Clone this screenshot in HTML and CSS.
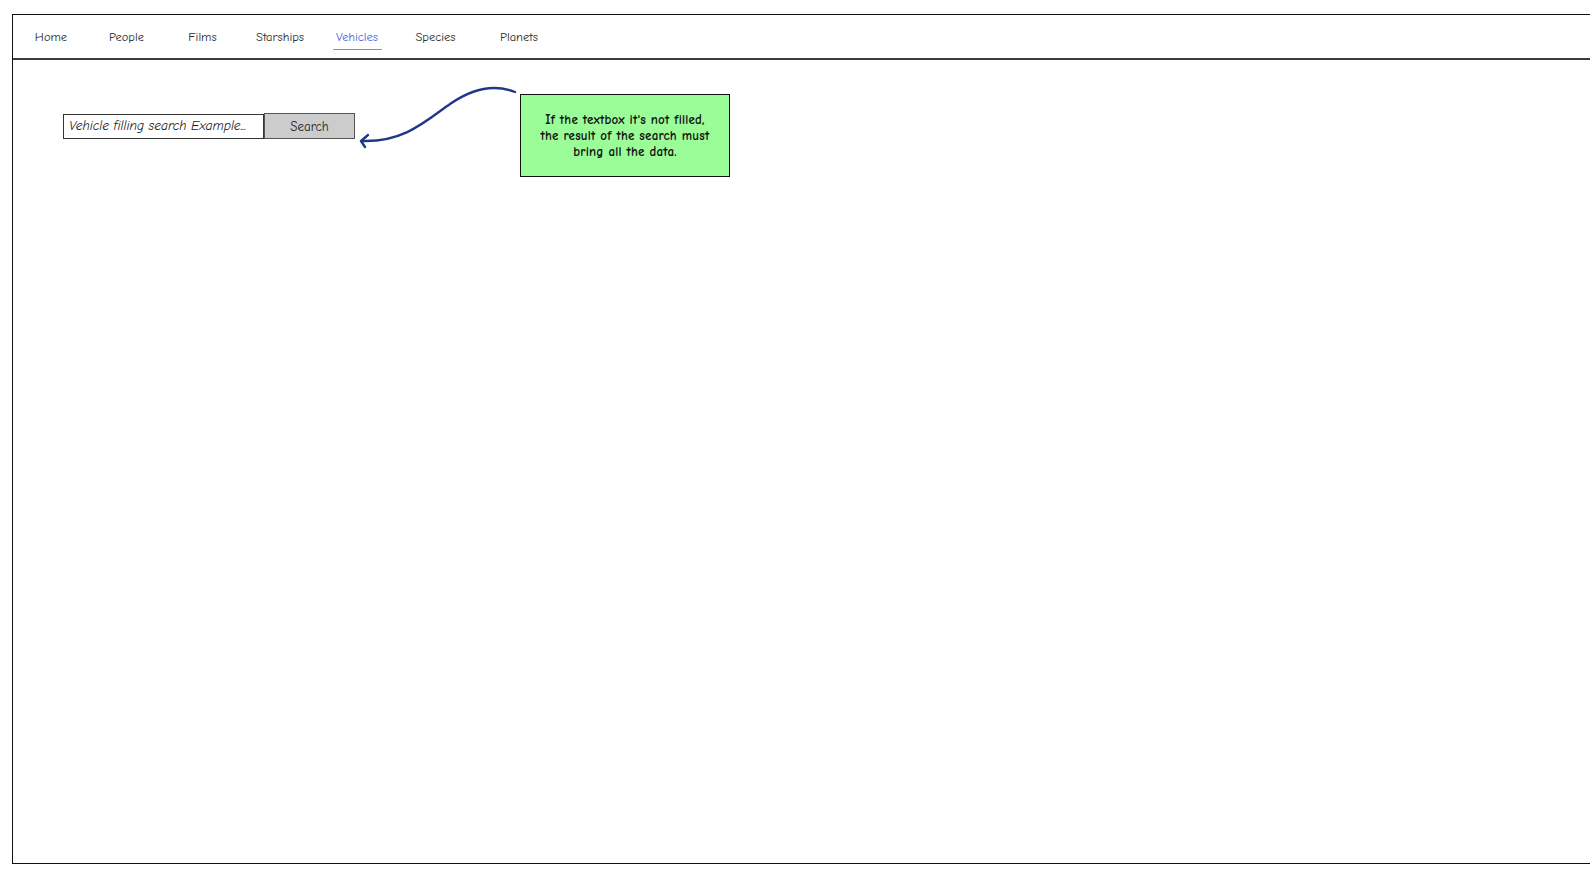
FILE: index.html
```html
<!DOCTYPE html>
<html lang="en">
<head>
<meta charset="utf-8">
<title>Vehicles</title>
<link rel="stylesheet" href="styles.css">
</head>
<body>
<div class="frame">
  <nav class="nav">
    <a class="tab">Home</a>
    <a class="tab">People</a>
    <a class="tab">Films</a>
    <a class="tab">Starships</a>
    <a class="tab active">Vehicles</a>
    <a class="tab">Species</a>
    <a class="tab">Planets</a>
  </nav>
  <main class="content">
    <div class="row">
      <div class="search">
        <div class="input">Vehicle filling search Example...</div>
        <div class="button">Search</div>
      </div>
      <svg class="arrow" width="165" height="70" viewBox="0 0 165 70">
        <path d="M160 8 C140 0 118 4 95 20 C72 36 50 58 8 57" fill="none" stroke="#22378a" stroke-width="2.4" stroke-linecap="round"/>
        <path d="M13 51 L6 57 L10 63" fill="none" stroke="#22378a" stroke-width="2.4" stroke-linecap="round" stroke-linejoin="round"/>
      </svg>
      <div class="note">If the textbox it's not filled,<br>the result of the search must<br>bring all the data.</div>
    </div>
  </main>
</div>
</body>
</html>
```
FILE: styles.css
```css
html, body {
  margin: 0;
  padding: 0;
  background: #ffffff;
  overflow: hidden;
}

body {
  font-family: "Comic Neue", "Liberation Sans", Arial, sans-serif;
  color: #222;
  width: 1590px;
  height: 875px;
}

.frame {
  margin: 14px 0 0 12px;
  width: 1600px;
  height: 850px;
  border: 1.5px solid #111;
  border-right: none;
  box-sizing: border-box;
}

.nav {
  display: grid;
  grid-template-columns: 76px 75px 77px 78px 76px 81px 86px;
  align-items: center;
  height: 43px;
  border-bottom: 2px solid #3c3c3c;
}

.tab {
  justify-self: center;
  font-size: 12.5px;
  color: #2a2a2a;
  position: relative;
  line-height: 16px;
  margin-top: 1px;
}

.tab.active {
  color: #3f66e8;
}

.tab.active::after {
  content: "";
  position: absolute;
  left: -3px;
  right: -4px;
  bottom: -5px;
  height: 1.5px;
  background: #6b8df2;
  border-radius: 1px;
}

.content {
  padding: 34px 0 0 50px;
}

.row {
  display: flex;
  align-items: flex-start;
}

.search {
  display: flex;
  margin-top: 20px;
}

.input {
  width: 201px;
  height: 25px;
  box-sizing: border-box;
  border: 1.5px solid #333;
  background: #fff;
  font-style: italic;
  font-size: 13.5px;
  color: #1a1a1a;
  padding: 0 0 0 5px;
  line-height: 21px;
  white-space: nowrap;
  overflow: hidden;
}

.button {
  width: 91px;
  height: 26px;
  margin-top: -1px;
  box-sizing: border-box;
  border: 1.5px solid #555;
  background: #cccccc;
  font-size: 13px;
  color: #222;
  text-align: center;
  line-height: 26px;
}

.arrow {
  display: block;
  margin-top: -10px;
  flex: none;
}

.note {
  width: 210px;
  height: 83px;
  box-sizing: border-box;
  border: 1px solid #111;
  background: #9bfd98;
  font-size: 13px;
  font-weight: 700;
  color: #111;
  text-align: center;
  line-height: 16px;
  letter-spacing: 0.2px;
  display: flex;
  align-items: center;
  justify-content: center;
  padding-top: 1px;
}
```
